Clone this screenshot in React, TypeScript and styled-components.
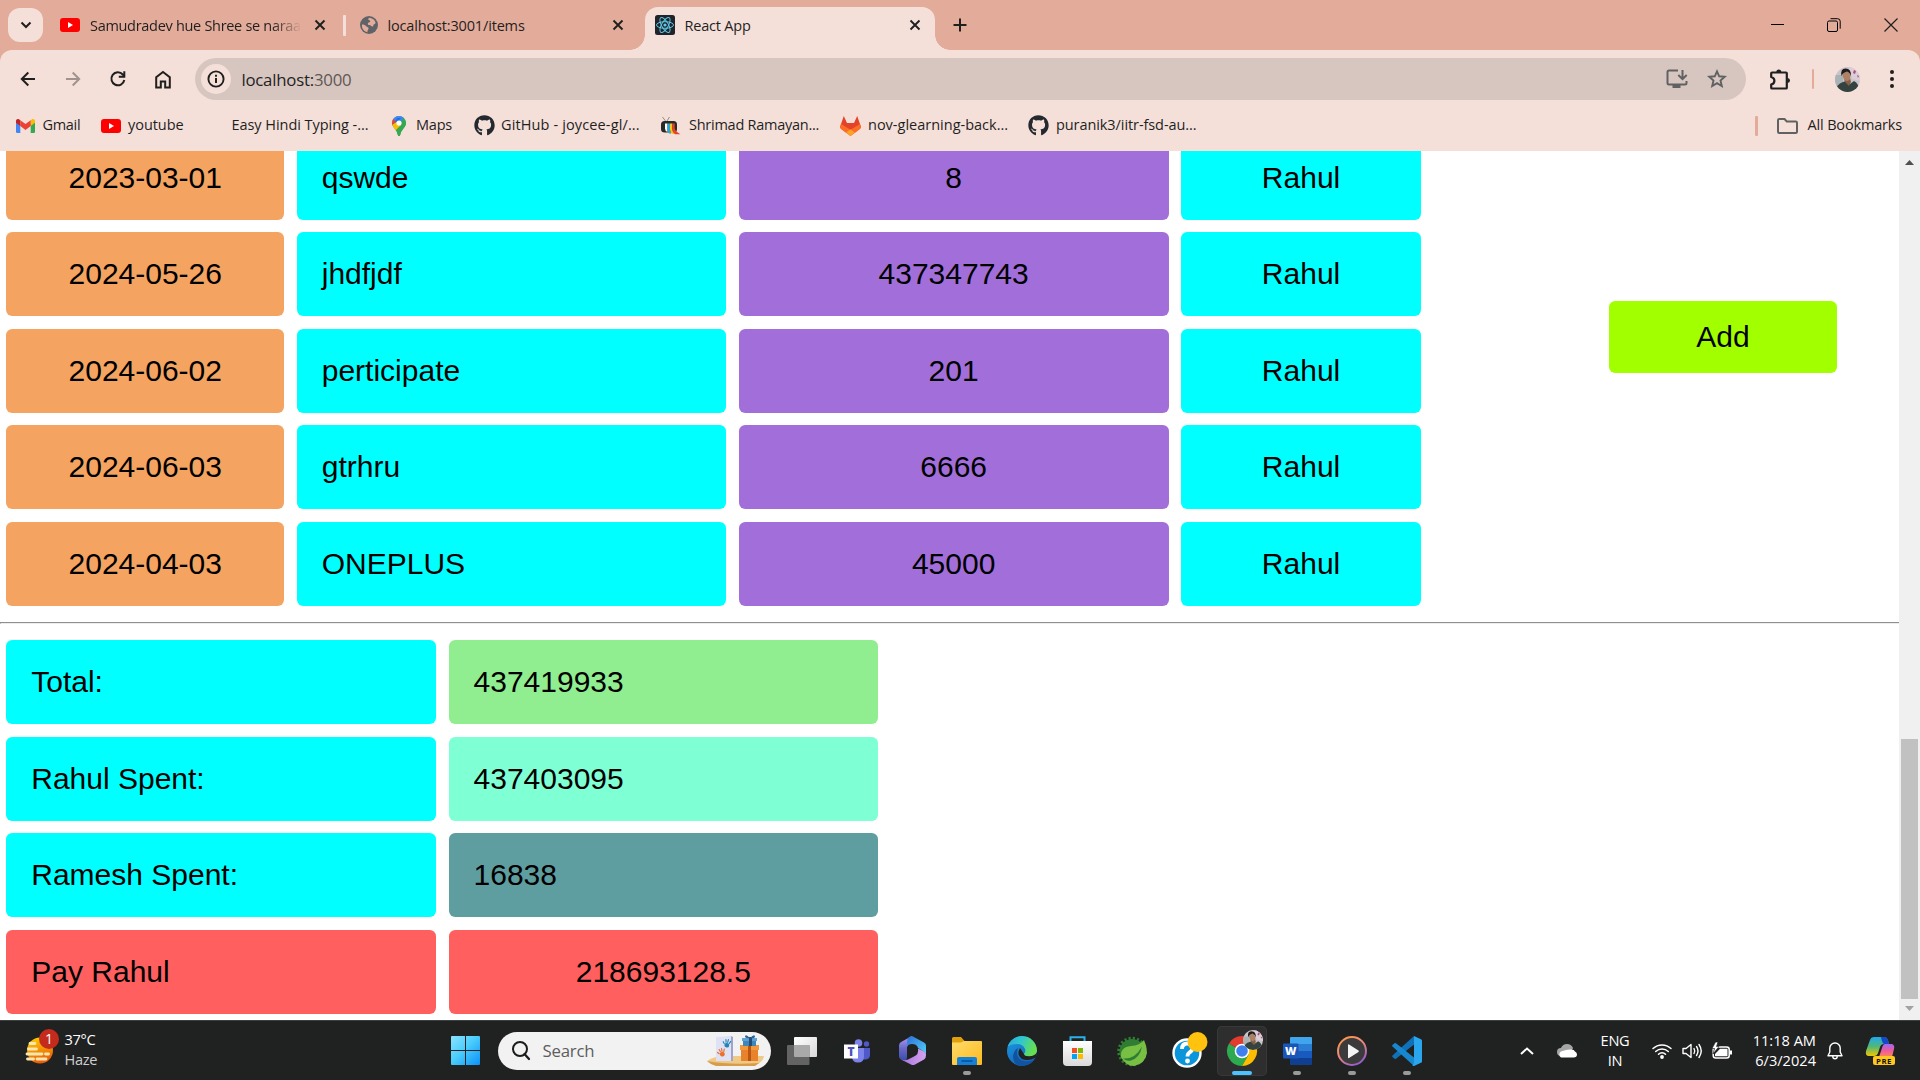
import React from "react";
import styled, { createGlobalStyle, css } from "styled-components";
import { FaGithub } from "react-icons/fa";

const GlobalStyle = createGlobalStyle`
  * { box-sizing: border-box; }
  html, body { margin: 0; padding: 0; overflow: hidden; background: #fff; }
  svg { display: block; flex: none; overflow: visible; }
`;

const Screen = styled.div`
  width: 1920px;
  height: 1080px;
  display: flex;
  flex-direction: column;
  overflow: hidden;
  font-family: "Open Sans", "Noto Sans", sans-serif;
  color: #1f1f1f;
`;

/* ---------- browser chrome ---------- */

const Frame = styled.div`
  height: 151px;
  flex: none;
  background: #e3ab9a;
`;

const TabStrip = styled.div`
  height: 50px;
  display: flex;
  align-items: center;
  padding-left: 8px;
`;

const TabSearch = styled.div`
  width: 35px;
  height: 34px;
  border-radius: 12px;
  background: #f5e0d9;
  display: flex;
  align-items: center;
  justify-content: center;
`;

const Tab = styled.div<{ $w: number; $ml: number; $active?: boolean }>`
  width: ${(p) => p.$w}px;
  margin-left: ${(p) => p.$ml}px;
  height: 35px;
  display: flex;
  align-items: center;
  ${(p) =>
    p.$active &&
    css`
      position: relative;
      height: 43px;
      margin-top: 7px;
      padding: 0 0 7px 10px;
      background: #f5e0d9;
      border-radius: 13px 13px 0 0;
      &::before,
      &::after {
        content: "";
        position: absolute;
        bottom: 0;
        width: 15px;
        height: 15px;
      }
      &::before {
        left: -15px;
        background: radial-gradient(circle at 0 0, transparent 14.5px, #f5e0d9 15px);
      }
      &::after {
        right: -15px;
        background: radial-gradient(circle at 100% 0, transparent 14.5px, #f5e0d9 15px);
      }
    `}
`;

const TabTitle = styled.div<{ $w: number; $ls?: number; $fade?: boolean }>`
  width: ${(p) => p.$w}px;
  margin-left: 10px;
  padding-top: 1px;
  font-size: 14.5px;
  line-height: 20px;
  letter-spacing: ${(p) => p.$ls ?? -0.3}px;
  white-space: nowrap;
  ${(p) => p.$fade && "mask-image: linear-gradient(90deg, #000 81%, transparent 94%);"}
`;

const TabDivider = styled.div`
  width: 2.5px;
  height: 21px;
  border-radius: 1px;
  background: #f5e0d9;
`;

const NewTab = styled.div`
  margin-left: 18.5px;
`;

const WindowButtons = styled.div`
  margin-left: auto;
  display: flex;
  gap: 42.6px;
  align-items: center;
  padding-right: 22px;
`;

const Toolbar = styled.div`
  height: 58px;
  display: flex;
  align-items: center;
  padding-left: 19px;
  border-radius: 12px 12px 0 0;
  background: #f5e0d9;
`;

const NavButtons = styled.div`
  width: 176px;
  display: flex;
  gap: 27px;
  align-items: center;
`;

const Omnibox = styled.div`
  width: 1552px;
  height: 42px;
  border-radius: 21px;
  background: #d7c6bf;
  display: flex;
  align-items: center;
  padding: 0 19px 0 6px;
`;

const SiteInfo = styled.div`
  width: 30px;
  height: 30px;
  border-radius: 50%;
  background: #f5e0d9;
  display: flex;
  align-items: center;
  justify-content: center;
`;

const Address = styled.div`
  flex: 1;
  margin-left: 10.5px;
  font-size: 16.8px;
  letter-spacing: -0.22px;
  span { color: #5e5855; }
`;

const OmniActions = styled.div`
  display: flex;
  gap: 19px;
`;

const ToolbarEnd = styled.div`
  flex: 1;
  display: flex;
  align-items: center;
  padding: 0 26px 0 23px;
`;

const Rule = styled.div<{ $ml: number }>`
  width: 2.5px;
  height: 20px;
  margin-left: ${(p) => p.$ml}px;
  border-radius: 1px;
  background: #e3ab9a;
`;

const Bookmarks = styled.div`
  height: 43px;
  display: flex;
  align-items: center;
  padding: 0 18px 8px 16px;
  background: #f5e0d9;
`;

const Bookmark = styled.div<{ $w: number }>`
  width: ${(p) => p.$w}px;
  display: flex;
  align-items: center;
`;

const BookmarkIcon = styled.div<{ $w: number }>`
  width: ${(p) => p.$w}px;
  flex: none;
`;

const BookmarkText = styled.span<{ $ls?: number }>`
  display: block;
  padding-bottom: 1px;
  font-size: 14.5px;
  line-height: 20px;
  letter-spacing: ${(p) => p.$ls ?? -0.3}px;
  white-space: nowrap;
`;

const AllBookmarks = styled.div`
  margin-left: auto;
  display: flex;
  align-items: center;
`;

/* ---------- page ---------- */

const Viewport = styled.div`
  height: 869px;
  flex: none;
  display: flex;
  background: #fff;
  overflow: hidden;
  font-family: Arial, "Liberation Sans", sans-serif;
  font-size: 30px;
  color: #000;
`;

const Page = styled.main`
  width: 1899px;
  height: 869px;
  display: flex;
  flex-direction: column;
`;

const Expenses = styled.section`
  height: 471px;
  display: flex;
  align-items: flex-end;
  justify-content: space-between;
  padding: 0 62px 16.5px 6.25px;
`;

const Table = styled.div`
  display: flex;
  flex-direction: column;
  gap: 12.5px;
`;

const TableRow = styled.div`
  display: flex;
  gap: 12.5px;
`;

const Cell = styled.div<{ $w: number; $bg: string; $center?: boolean }>`
  width: ${(p) => p.$w}px;
  height: 84px;
  display: flex;
  align-items: center;
  justify-content: ${(p) => (p.$center ? "center" : "flex-start")};
  padding: 0 25px;
  border-radius: 6.25px;
  background: ${(p) => p.$bg};
`;

const AddButton = styled.button`
  width: 228px;
  height: 72px;
  margin-bottom: 232.5px;
  padding: 0;
  border: 0;
  border-radius: 6.25px;
  background: #a2ff00;
  color: #000;
  font: inherit;
`;

const Divider = styled.hr`
  width: 100%;
  height: 2px;
  margin: 0;
  border: 0 solid;
  border-width: 1px 0 1px 1px;
  border-color: #8f8f8f #ededed #ededed #8f8f8f;
`;

const Totals = styled.section`
  padding: 16px 0 0 6.25px;
`;

const Scrollbar = styled.div`
  width: 21px;
  background: #f0f0f0;
  display: flex;
  flex-direction: column;
  align-items: center;
  justify-content: space-between;
  padding: 9px 0 9px;
`;

const ScrollTrack = styled.div`
  width: 17px;
  height: 839px;
  display: flex;
  align-items: flex-end;
  padding-bottom: 6px;
`;

const Thumb = styled.div`
  width: 17px;
  height: 260px;
  background: #c1c1c1;
`;

/* ---------- taskbar ---------- */

const Taskbar = styled.footer`
  height: 60px;
  flex: none;
  display: flex;
  align-items: center;
  background: #202121;
  border-top: 1px solid #3a3f40;
  color: #fff;
`;

const Weather = styled.div`
  width: 451px;
  display: flex;
  align-items: center;
  padding: 0 0 2px 25px;
  gap: 10.5px;
`;

const Lines = styled.div<{ $align?: string; $w?: number; $ls?: number }>`
  width: ${(p) => (p.$w ? p.$w + "px" : "auto")};
  padding-bottom: 2px;
  text-align: ${(p) => p.$align ?? "left"};
  font-size: 14.6px;
  line-height: 20px;
  letter-spacing: ${(p) => p.$ls ?? -0.3}px;
  white-space: nowrap;
`;

const Dim = styled.div`
  color: #cfcfcf;
`;

const SearchPill = styled.div`
  width: 273px;
  height: 38px;
  margin: 0 6px 0 18px;
  border-radius: 19px;
  background: #f2f2f2;
  display: flex;
  align-items: center;
  padding: 0 5px 0 14px;
  overflow: hidden;
`;

const SearchText = styled.span`
  flex: 1;
  margin-left: 12.5px;
  color: #5d5d5d;
  font-size: 16.8px;
  letter-spacing: -0.2px;
`;

const Apps = styled.div`
  display: flex;
  gap: 5px;
`;

const AppSlot = styled.div<{ $active?: boolean; $run?: boolean }>`
  position: relative;
  width: 50px;
  height: 50px;
  display: flex;
  align-items: center;
  justify-content: center;
  border-radius: 5px;
  background: ${(p) => (p.$active ? "#2e2e2e" : "transparent")};
  box-shadow: ${(p) => (p.$active ? "inset 0 0 0 1px #383838" : "none")};
  &::after {
    content: "";
    position: absolute;
    bottom: 1px;
    height: 4px;
    border-radius: 2px;
    width: ${(p) => (p.$active ? 20 : p.$run ? 8 : 0)}px;
    background: ${(p) => (p.$active ? "#4cc2ff" : "#9a9a9a")};
  }
`;

const Tray = styled.div`
  margin-left: auto;
  display: flex;
  align-items: center;
  padding-right: 24px;
`;

const TrayItem = styled.div<{ $ml: number }>`
  margin-left: ${(p) => p.$ml}px;
`;

/* ---------- drawings ---------- */

const YouTube = () => (
  <svg width="20" height="14" viewBox="0 0 20 14">
    <rect width="20" height="14" rx="3" fill="#f00" />
    <path d="M8 4v6l5-3z" fill="#fff" />
  </svg>
);

const CloseX = ({ s = 10, w = 1.9 }: { s?: number; w?: number }) => (
  <svg width={s} height={s} viewBox={`0 0 ${s} ${s}`}>
    <path d={`M.5.5 ${s - 0.5} ${s - 0.5}M${s - 0.5}.5.5 ${s - 0.5}`} stroke="#1f1f1f" strokeWidth={w} />
  </svg>
);

const Globe = () => (
  <svg width="18" height="18" viewBox="0 0 18 18">
    <circle cx="9" cy="9" r="9" fill="#5f6368" />
    <path d="M2 8.500c2 0 3 .5 4.500 2 .8 1 2.300 .5 2 2.300-.2 1-1 1.200-1.200 3.400C4 15.600 1.500 12.500 2 8.500zM9 1.800c3 .1 5.500 1.900 6.600 4.600-.3 1.500-1.300 1.500-2.100 2.300-.5.700.2 1.400-.6 1.700-1.300.5-2-1-3.500-1.300-1.200-.2-1.600-.5-1.600-1.400 0-1.200 1.600-1 2.300-1.900C10.700 4.700 9.500 4 8 3.400z" fill="#e3ab9a" />
  </svg>
);

const ReactIcon = () => (
  <svg width="20" height="20" viewBox="0 0 20 20">
    <rect width="20" height="20" rx="2.500" fill="#20232a" />
    <g fill="none" stroke="#5dc9e8" strokeWidth="1">
      <ellipse cx="10" cy="10" rx="8.500" ry="3.300" />
      <ellipse cx="10" cy="10" rx="8.500" ry="3.300" transform="rotate(60 10 10)" />
      <ellipse cx="10" cy="10" rx="8.500" ry="3.300" transform="rotate(120 10 10)" />
    </g>
    <circle cx="10" cy="10" r="1.600" fill="#5dc9e8" />
  </svg>
);

const Arrow = ({ flip, color }: { flip?: boolean; color: string }) => (
  <svg width="18" height="18" viewBox="0 0 18 18" transform={flip ? "scale(-1 1)" : undefined}>
    <path d="M16 9H3M9.300 2.500 2.800 9l6.500 6.500" fill="none" stroke={color} strokeWidth="2" />
  </svg>
);

const Reload = () => (
  <svg width="18" height="18" viewBox="0 0 18 18">
    <path d="M15.300 10A6.500 6.500 0 1 1 13.800 4.500L15.500 6.500" fill="none" stroke="#1f1f1f" strokeWidth="2" />
    <path d="M16.300 1.200v6.500H9.800v-2h4.500V1.200z" fill="#1f1f1f" />
  </svg>
);

const Home = () => (
  <svg width="18" height="19" viewBox="0 0 18 19">
    <path d="M2.200 17.500V7.200L9 2l6.800 5.200v10.300h-4.600v-6H6.800v6z" fill="none" stroke="#1f1f1f" strokeWidth="2" />
  </svg>
);

const Info = () => (
  <svg width="18" height="18" viewBox="0 0 18 18">
    <circle cx="9" cy="9" r="7.600" fill="none" stroke="#1f1f1f" strokeWidth="1.900" />
    <path d="M9 8v5M9 4.700v2" stroke="#1f1f1f" strokeWidth="2" />
  </svg>
);

const Install = () => (
  <svg width="22" height="20" viewBox="0 0 22 20">
    <path d="M12 1.500H3Q1.500 1.500 1.500 3v11Q1.500 15.500 3 15.500h16q1.500 0 1.500-1.500v-2" fill="none" stroke="#5f6163" strokeWidth="2" />
    <path d="M6.500 15h8v4h-8z" fill="#5f6163" />
    <path d="M16.500 1v9M12.300 6l4.200 4.200L20.700 6" fill="none" stroke="#5f6163" strokeWidth="2" />
  </svg>
);

const Star = () => (
  <svg width="20" height="19" viewBox="0 0 20 19">
    <path d="M10 2.300 12.200 7.300l5.500.5-4.200 3.700 1.300 5.500-4.800-2.900L5.200 17l1.300-5.500-4.200-3.700 5.500-.5z" fill="none" stroke="#5f6163" strokeWidth="1.900" />
  </svg>
);

const Extension = () => (
  <svg width="22" height="21" viewBox="0 0 22 21">
    <path d="M3 3.500h14q.8 0 .8.800v14.400q0 .8-.8.800H3q-.8 0-.8-.8V15.500q3.200-.8 3.200-3.800T2.200 8V4.300q0-.8.800-.8z" fill="none" stroke="#1f1f1f" strokeWidth="2.200" strokeLinejoin="round" />
    <path d="M7.300 3a2.500 2.500 0 0 1 5 0zM18.500 9a2.500 2.500 0 0 1 0 5z" fill="#1f1f1f" />
  </svg>
);

const Portrait = ({ s, id }: { s: number; id: string }) => (
  <svg width={s} height={s} viewBox="0 0 25 25">
    <clipPath id={id}>
      <circle cx="12.500" cy="12.500" r="12.500" />
    </clipPath>
    <g clipPath={`url(#${id})`}>
      <rect width="25" height="25" fill="#c9c4c9" />
      <path d="M14 0h11v14l-8-2z" fill="#dccdd6" />
      <path d="m19 3 2 1-1 3-2-1zM22 8l2 1-1 2z" fill="#a8507a" />
      <path d="M0 8h8v17H0z" fill="#a9b2b4" />
      <path d="M1 25q0-8 7-10l3-1 4 3 4-3q5 2 5 11z" fill="#34433f" />
      <path d="m9 12 1 3 4 4 2-4-1-4z" fill="#8a5f47" />
      <ellipse cx="11.500" cy="9" rx="3.700" ry="5" fill="#ae8164" transform="rotate(-18 11.500 9)" />
      <path d="M6.500 9Q5 1.500 10.500 1.500q6 0 5.500 8-1-4-4-5-3 1-4 2z" fill="#211c1c" />
    </g>
  </svg>
);

const Dots = () => (
  <svg width="4" height="20" viewBox="0 0 4 20">
    {[3, 10, 17].map((y) => (
      <circle key={y} cx="2" cy={y} r="2" fill="#1f1f1f" />
    ))}
  </svg>
);

const Gmail = () => (
  <svg width="19" height="14" viewBox="0 0 19 14">
    <path d="M0 2v10.700Q0 14 1.300 14h3V5z" fill="#4285f4" />
    <path d="M19 2v10.700q0 1.300-1.300 1.300h-3V5z" fill="#34a853" />
    <path d="M14.700 1.200V7L19 3.800V2c0-1.900-2-2.500-3.300-1.500z" fill="#fbbc04" />
    <path d="M4.300 1.200V7L0 3.800V2C0 .1 2-.5 3.300.5z" fill="#c5221f" />
    <path d="M4.300 7V1.200l5.200 3.900 5.200-3.900V7l-5.200 3.900z" fill="#ea4335" />
  </svg>
);

const MapsPin = () => (
  <svg width="14" height="20" viewBox="0 0 14 20">
    <clipPath id="pin">
      <path d="M7 0a7 7 0 0 1 7 7c0 4.500-5 6.500-5.700 11.700Q8 20 7 20t-1.300-1.300C5 13.500 0 11.500 0 7a7 7 0 0 1 7-7z" />
    </clipPath>
    <g clipPath="url(#pin)">
      <rect width="14" height="20" fill="#34a853" />
      <path d="M0 0h14L5 9 0 4z" fill="#4285f4" />
      <path d="M0 2 5 6 1.500 10-1 8z" fill="#ea4335" />
      <path d="m1 11 8-9H5z" fill="#1a73e8" />
      <path d="M0 9 4.500 6l4.500 3-6 6z" fill="#fbbc04" />
      <path d="m14 4-5 6-5 6 3 5 8-10z" fill="#34a853" />
    </g>
    <circle cx="7" cy="7" r="2.600" fill="#fff" />
  </svg>
);

const RetroTv = () => (
  <svg width="20" height="18" viewBox="0 0 20 18">
    <path d="m4.500 4-3-4M6 4l2.500-4" stroke="#777" strokeWidth=".8" />
    <rect x="0" y="4" width="16" height="11.500" rx="3.500" fill="#2b2927" />
    <path d="M4 6.500h2.500V15Q4 14 4 11.500z" fill="#fff" />
    <path d="M6.500 6.500H9V15l1 2q-3.500-.5-3.500-4.500z" fill="#2aa7d8" />
    <path d="M9 6.500h2.300V12q0 3 2.700 5h-3Q9 15.500 9 12.500z" fill="#f6c71c" />
    <path d="M11.300 6.500h2.400V11q.3 3.500 5.800 6.300h-5.500q-2.700-2-2.700-5.300z" fill="#e4422b" />
  </svg>
);

const GitLab = () => (
  <svg width="21" height="20" viewBox="0 0 21 20">
    <path d="M3.800 0 1 8l-.8 2.500q-.3 1.500 1 2.500l9.300 7 9.300-7q1.300-1 1-2.500L20 8 17.200 0l-3.200 7H7z" fill="#e24329" />
    <path d="M1 8 .2 10.500q-.3 1.500 1 2.500l9.300 7L15 16.600zM20 8l.8 2.500q.3 1.500-1 2.500l-9.300 7L6 16.600z" fill="#fc6d26" />
    <path d="m6 16.600 4.500-3.400 4.500 3.400-4.500 3.400z" fill="#fca326" />
    <path d="M4 7h13l-6.500 6.500z" fill="#e24329" />
  </svg>
);

const Folder = () => (
  <svg width="21" height="16" viewBox="0 0 21 16">
    <path d="M1 2.200Q1 1 2.200 1H7.500l2.300 2.500h9Q20 3.500 20 4.700v9Q20 15 18.800 15H2.200Q1 15 1 13.800z" fill="none" stroke="#5f6163" strokeWidth="2" />
  </svg>
);

const HazeIcon = () => (
  <svg width="29" height="42" viewBox="0 0 29 42">
    <defs>
      <linearGradient id="sun" x1="0" y1="0" x2=".3" y2="1">
        <stop offset="0" stopColor="#ffd400" />
        <stop offset="1" stopColor="#e8600a" />
      </linearGradient>
    </defs>
    <circle cx="15" cy="21.500" r="13" fill="url(#sun)" />
    <g stroke="#fbe6b0" strokeWidth="2.800" strokeLinecap="round">
      <path d="M5 14.500h5M3.500 20h8M2 25h15M20.500 25h3M2.500 30h6M12 30h9" />
    </g>
    <circle cx="24" cy="10" r="10" fill="#c42b1c" />
    <text x="24" y="15" textAnchor="middle" fontSize="14" fill="#fff">1</text>
  </svg>
);

const WinLogo = () => (
  <svg width="29" height="29" viewBox="0 0 29 29">
    <defs>
      <linearGradient id="win" x1="0" y1="0" x2="1" y2="1">
        <stop offset="0" stopColor="#8ae3ff" />
        <stop offset=".45" stopColor="#4ccdfb" />
        <stop offset="1" stopColor="#0a92f8" />
      </linearGradient>
    </defs>
    <path d="M1 0h13v14H0V1q0-1 1-1zM15 0h13q1 0 1 1v13H15zM0 15h14v14H1q-1 0-1-1zM15 15h14v13q0 1-1 1H15z" fill="url(#win)" />
  </svg>
);

const Magnifier = () => (
  <svg width="18" height="19" viewBox="0 0 18 19">
    <circle cx="8" cy="8" r="7" fill="none" stroke="#1c1c1c" strokeWidth="2" />
    <path d="m12.500 13 4.500 5" stroke="#1c1c1c" strokeWidth="2.300" strokeLinecap="round" />
  </svg>
);

const Hand = ({ x, y, c, r }: { x: number; y: number; c: string; r: number }) => (
  <g transform={`translate(${x} ${y}) rotate(${r}) scale(.82)`} stroke={c} strokeWidth="1.400" strokeLinecap="round">
    <ellipse cx="0" cy="1.500" rx="3" ry="2.800" fill={c} stroke="none" />
    <path d="M-3.500 0-5-2M-1.500-2-2.200-5M.5-2 .8-5.500M2.500-1 4-4" />
  </g>
);

const SearchArt = () => (
  <svg width="60" height="32" viewBox="0 0 60 32">
    <path d="M1 26q8-5 16-5h41q-1 6-8 9H10q-6-1-9-4z" fill="#f0c987" />
    <path d="M1 26q4 4 9 5h39l4-3q-30 2-52-2z" fill="#d69d4d" />
    <path d="m10 2 15-1 2 1v24H10z" fill="#dfe1f5" />
    <path d="m25 1 2 1v24h-2z" fill="#9fa4cf" />
    <Hand x={21} y={9} c="#2384b5" r={10} />
    <Hand x={16} y={18} c="#ec6f2c" r={-15} />
    <path d="M35 12h17v14H35z" fill="#e8832b" />
    <path d="M34 10h19v5H34z" fill="#f2993d" />
    <path d="M42 10h3v16h-3z" fill="#b85713" />
    <path d="M37 3h13v8H37z" fill="#3f87ba" />
    <path d="M36 3h15v3H36z" fill="#5ba3d4" />
    <path d="M43 2h3v9h-3z" fill="#234d78" />
    <path d="M44 3q-5-5-5-1 2 2 5 1 5-5 5-1-1 2-5 1z" fill="#315f94" />
  </svg>
);

const TaskView = () => (
  <svg width="30" height="28" viewBox="0 0 30 28">
    <defs>
      <linearGradient id="tv" x2="1" y2="1"><stop stopColor="#fff" /><stop offset="1" stopColor="#d8d8d8" /></linearGradient>
    </defs>
    <rect x="7" y="0" width="23" height="20" rx="1" fill="url(#tv)" />
    <rect x="0" y="8" width="22.500" height="20" rx="1" fill="#636363" />
    <path d="M7 8h15.500v12H8q-1 0-1-1z" fill="#a9a9a9" />
  </svg>
);

const Teams = () => (
  <svg width="27" height="24" viewBox="0 0 27 24">
    <circle cx="14.500" cy="4" r="3.800" fill="#7b83eb" />
    <circle cx="22.500" cy="5" r="2.700" fill="#5059c9" />
    <path d="M18 9h8v7q0 4-4.500 4.500H18z" fill="#5059c9" />
    <path d="M8 9h12v8.500q0 6-6 6t-6-6z" fill="#7b83eb" />
    <rect x="0" y="5.500" width="14" height="14" fill="#fff" />
    <text x="7" y="17" textAnchor="middle" fontWeight="800" fontSize="12" fill="#4b53bc">T</text>
  </svg>
);

const M365 = () => (
  <svg width="27" height="29" viewBox="0 0 27 29">
    <defs>
      <linearGradient id="ma" x2="0" y2="1"><stop stopColor="#b69cf2" /><stop offset=".5" stopColor="#6968c8" /><stop offset="1" stopColor="#3a4ba5" /></linearGradient>
      <linearGradient id="mb" x2="1" y2="1"><stop stopColor="#2c6fd8" /><stop offset="1" stopColor="#55d5f8" /></linearGradient>
      <linearGradient id="mc" x2="1"><stop stopColor="#a573dc" /><stop offset="1" stopColor="#d6a3f0" /></linearGradient>
    </defs>
    <path d="M13 0 2 6Q0 7 0 9.500v11q0 2 2 3l3 1.500q3-1 3-4V11q0-3 3-5l2-1z" fill="url(#ma)" />
    <path d="m10 1 3-1 12 6.500q2 1 2 3V20q0-4-4-5.500L19 12q-1-4-6-4-4 0-5 3V6q0-3 2-5z" fill="url(#mb)" />
    <path d="M2 23.500 12 28.500q2 1 4 0l9-5q2-1 2-4.500 0-3-4-4.500L19 12.500q1 6-4 8l-6 3q-4 1.500-7 0z" fill="url(#mc)" />
  </svg>
);

const Explorer = () => (
  <svg width="30" height="28" viewBox="0 0 30 28">
    <defs>
      <linearGradient id="ex" x2="1" y2="1"><stop stopColor="#ffdc6b" /><stop offset="1" stopColor="#fcb91f" /></linearGradient>
    </defs>
    <path d="M0 1.500Q0 0 1.500 0H9l3.500 4H29v8H0z" fill="#e2a00d" />
    <path d="M0 5.500h9L12 4h17q1 0 1 1v22q0 1-1 1H1q-1 0-1-1z" fill="url(#ex)" />
    <path d="M5 28v-6q0-2 2-2h16q2 0 2 2v6z" fill="#1480d8" />
    <path d="M9.500 24h11" stroke="#0c599e" strokeWidth="1.800" />
  </svg>
);

const Edge = () => (
  <svg width="30" height="30" viewBox="0 0 30 30">
    <defs>
      <linearGradient id="ea" x2="1" y2=".3"><stop stopColor="#2aa5e0" /><stop offset=".5" stopColor="#30c6cf" /><stop offset="1" stopColor="#66e04e" /></linearGradient>
      <linearGradient id="eb" x2=".6" y2="1"><stop stopColor="#1b9de2" /><stop offset="1" stopColor="#1464b8" /></linearGradient>
      <clipPath id="ec"><circle cx="15" cy="15" r="15" /></clipPath>
    </defs>
    <g clipPath="url(#ec)">
      <rect width="30" height="30" fill="url(#eb)" />
      <path d="M11 12q-3 9 4 12.500 6 2.500 15-1.500v8H15Q6 29 6 20q1-6 5-8z" fill="#1253a0" />
      <path d="M13 12q-4 7 2 11 6 2.500 13-1l4 1V16l-10 4-5-2z" fill="#202121" />
      <path d="M-1 12Q3 0 15 0q15 1 15.500 12 0 8-8.500 8.300-5 0-5-2.500 2-2 1-5Q16 8 10 8 3 8-1 12z" fill="url(#ea)" />
    </g>
  </svg>
);

const Store = () => (
  <svg width="29" height="30" viewBox="0 0 29 30">
    <defs>
      <linearGradient id="st" x2="0" y2="1"><stop stopColor="#fff" /><stop offset="1" stopColor="#d9d9d9" /></linearGradient>
    </defs>
    <path d="M7.500 8V1.200h14V8" fill="none" stroke="#2ab2e8" strokeWidth="2" />
    <path d="M0 5h29v21q0 4-4 4H4q-4 0-4-4z" fill="url(#st)" />
    <path d="M9 12h5v5H9z" fill="#f25022" />
    <path d="M15 12h5v5h-5z" fill="#7fba00" />
    <path d="M9 18h5v5H9z" fill="#00a4ef" />
    <path d="M15 18h5v5h-5z" fill="#ffb900" />
  </svg>
);

const Spring = () => (
  <svg width="30" height="30" viewBox="0 0 30 30">
    <circle cx="15" cy="15.500" r="12.500" fill="#2f7d32" />
    <circle cx="15" cy="15.500" r="13.300" fill="none" stroke="#2f7d32" strokeWidth="3" strokeDasharray="2.200 2" />
    <path d="M4 21Q3 11 14 10q9-.5 13-6 3 6 3 13-2 11-13 13-8 0-13-9z" fill="#78c043" />
    <path d="M6 22.500q12 1 19-12-2 11-11 14-5 1-8-2z" fill="#2f7d32" />
  </svg>
);

const Help = () => (
  <svg width="31" height="38" viewBox="0 0 31 38">
    <circle cx="15" cy="21" r="13.500" fill="#0b96dc" stroke="#fff" strokeWidth="2.400" />
    <path d="M10 17q0-5.500 5.500-5.500 5 0 5 4.500 0 2.700-3 4.500-2 1.300-2 4" fill="none" stroke="#fff" strokeWidth="3.800" />
    <circle cx="15.500" cy="29" r="2.400" fill="#fff" />
    <circle cx="25.500" cy="10" r="10" fill="#ffc20e" />
  </svg>
);

const ChromeWrap = styled.div`
  position: relative;
  > svg + svg {
    position: absolute;
    right: -6px;
    top: -6px;
  }
`;

const ChromeIcon = () => (
  <ChromeWrap>
    <svg width="30" height="30" viewBox="0 0 30 30">
      <path d="M15 15 2 7.500A15 15 0 0 0 15 30l6.500-11.300z" fill="#2da94f" />
      <path d="M28 7.500H15L21.500 18.700 15 30A15 15 0 0 0 28 7.500z" fill="#fdbd00" />
      <path d="M15 15 2 7.500A15 15 0 0 1 28 7.500H15z" fill="#e33b2e" />
      <circle cx="15" cy="15" r="7.300" fill="#fff" />
      <circle cx="15" cy="15" r="5.800" fill="#3f7fee" />
    </svg>
    <Portrait s={20} id="task-user" />
  </ChromeWrap>
);

const Word = () => (
  <svg width="29" height="28" viewBox="0 0 29 28">
    <path d="M7 1q0-1 1-1h20q1 0 1 1v6H7z" fill="#41a5ee" />
    <path d="M7 7h22v7H7z" fill="#2b7cd3" />
    <path d="M7 14h22v7H7z" fill="#185abd" />
    <path d="M7 21h22v6q0 1-1 1H8q-1 0-1-1z" fill="#103f91" />
    <rect x="0" y="6.500" width="15.500" height="15" rx="1" fill="#1a56b8" />
    <text x="7.700" y="18" textAnchor="middle" fontSize="11" fontWeight="800" fill="#fff">W</text>
  </svg>
);

const Player = () => (
  <svg width="30" height="30" viewBox="0 0 30 30">
    <defs>
      <linearGradient id="pl" x2=".6" y2="1"><stop stopColor="#ff9a3d" /><stop offset=".5" stopColor="#f08a78" /><stop offset="1" stopColor="#9a5fc8" /></linearGradient>
    </defs>
    <circle cx="15" cy="15" r="14" fill="#3b3b3b" stroke="url(#pl)" strokeWidth="2" />
    <path d="M11 9v12.500q0 1 1 .5l9.500-6q.8-.7 0-1.400L12 8.500q-1-.5-1 .5z" fill="#f4f4f4" />
  </svg>
);

const VsCode = () => (
  <svg width="30" height="30" viewBox="0 0 30 30">
    <path d="M22 0v8.500L4 22.800q-.8.600-1.500 0L.500 21q-.8-.8 0-1.600z" fill="#0f72b8" />
    <path d="M22 30v-8.500L4 7.200q-.8-.6-1.500 0L.500 9q-.8.800 0 1.600z" fill="#1788cf" />
    <path d="M22 0 29 3.200q1 .5 1 1.600v20.400q0 1.100-1 1.600L22 30q-1 .3-1.500-.5L22 27z" fill="#2aa6ef" />
  </svg>
);

const Chevron = ({ up, c, w = 12 }: { up?: boolean; c: string; w?: number }) => (
  <svg width={w} height="8" viewBox={`0 0 ${w} 8`}>
    <path d={up ? `M1 7 ${w / 2} 1.500 ${w - 1} 7` : `M1.500 1.500 ${w / 2} 6l${w / 2 - 1.5}-4.500`} fill="none" stroke={c} strokeWidth="2" />
  </svg>
);

const Cloud = () => (
  <svg width="20" height="14" viewBox="0 0 20 14">
    <path d="M4 12a4 4 0 0 1 0-8A6.500 6.500 0 0 1 16 4l-3 6z" fill="#a5a5a5" />
    <path d="M4 13.500a3.500 3.500 0 0 1 0-6l5-1.500 4-.500q4-.5 5 2 2 1 2 3 0 3-3.500 3z" fill="#fff" />
  </svg>
);

const Wifi = () => (
  <svg width="20" height="16" viewBox="0 0 20 16">
    <g fill="none" stroke="#fff" strokeWidth="1.500" strokeLinecap="round">
      <path d="M1 5.500a13 13 0 0 1 18 0M3.700 8.500a9 9 0 0 1 12.600 0M6.500 11.300a5 5 0 0 1 7 0" />
    </g>
    <circle cx="10" cy="14" r="1.900" fill="#fff" />
  </svg>
);

const Sound = () => (
  <svg width="20" height="16" viewBox="0 0 20 16">
    <g fill="none" stroke="#fff" strokeWidth="1.400" strokeLinecap="round" strokeLinejoin="round">
      <path d="M1 5.500h3L9 1.500v13l-5-4H1z" />
      <path d="M12 5.500q1.500 2.500 0 5M14.500 3.500q3 4.500 0 9M17 1.500q4.500 6.500 0 13" />
    </g>
  </svg>
);

const Battery = () => (
  <svg width="20" height="17" viewBox="0 0 20 17">
    <rect x="1.200" y="5" width="16" height="11" rx="2.500" fill="none" stroke="#fff" strokeWidth="1.500" />
    <path d="M3 14.300V12l5-5.200h7.500v7.500z" fill="#fff" />
    <path d="M18 8.500h2v4h-2z" fill="#fff" />
    <path d="M3.500 0 0 6.500h2.500L1 12l6-7.500H4.500L6 0z" fill="#fff" stroke="#202121" strokeWidth=".7" />
  </svg>
);

const Bell = () => (
  <svg width="16" height="18" viewBox="0 0 16 18">
    <path d="M8 1a5 5 0 0 0-5.200 5v4L1 13.800h14L13.200 10V6A5 5 0 0 0 8 1zM5.800 14.500a2.200 2.200 0 0 0 4.400 0" fill="none" stroke="#fff" strokeWidth="1.400" strokeLinejoin="round" />
  </svg>
);

const Copilot = () => (
  <svg width="30" height="28" viewBox="0 0 30 28">
    <defs>
      <linearGradient id="ca" x2="0" y2="1"><stop stopColor="#20a8ee" /><stop offset=".5" stopColor="#50b878" /><stop offset="1" stopColor="#f0c800" /></linearGradient>
      <linearGradient id="cb" x2="0" y2="1"><stop stopColor="#9b6cf0" /><stop offset=".5" stopColor="#ec5aa0" /><stop offset="1" stopColor="#ff8a50" /></linearGradient>
    </defs>
    <path d="M8 0h11q3 1 4 7h-5q-3 0-4 3l-2 6q-1 3-4 3H3q-4 0-3-5L4 3q1-3 4-3z" fill="url(#ca)" />
    <path d="M15 0h4q3 1 4 7h-5q-2-1-3-7z" fill="#1648c8" />
    <path d="M19 7h7q3 1 2 5l-2 8H13l3-9q1-4 3-4z" fill="url(#cb)" />
    <rect x="7" y="19" width="22" height="9" rx="2" fill="#ffc81e" />
    <text x="18" y="26.500" textAnchor="middle" fontSize="7.800" fontWeight="700" letterSpacing=".5" fill="#111">PRE</text>
  </svg>
);

const Triangle = ({ up }: { up?: boolean }) => (
  <svg width="9" height="5" viewBox="0 0 9 5">
    <path d={up ? "M0 5 4.500 0 9 5z" : "M0 0h9L4.500 5z"} fill={up ? "#505050" : "#a3a3a3"} />
  </svg>
);

/* ---------- data ---------- */

const expenses = [
  ["2023-03-01", "qswde", "8", "Rahul"],
  ["2024-05-26", "jhdfjdf", "437347743", "Rahul"],
  ["2024-06-02", "perticipate", "201", "Rahul"],
  ["2024-06-03", "gtrhru", "6666", "Rahul"],
  ["2024-04-03", "ONEPLUS", "45000", "Rahul"],
];

const totals = [
  { label: "Total:", value: "437419933", left: "#00ffff", right: "#90ee90" },
  { label: "Rahul Spent:", value: "437403095", left: "#00ffff", right: "#7fffd4" },
  { label: "Ramesh Spent:", value: "16838", left: "#00ffff", right: "#5f9ea0" },
  { label: "Pay Rahul", value: "218693128.5", left: "#ff5f5f", right: "#ff5f5f", center: true },
];

const bookmarks: { text: string; w: number; iw: number; icon: React.ReactNode; ls?: number }[] = [
  { text: "Gmail", w: 85, iw: 26.5, icon: <Gmail /> },
  { text: "youtube", w: 103, iw: 27, icon: <YouTube />, ls: -0.05 },
  { text: "Easy Hindi Typing -...", w: 188, iw: 27.5, icon: null, ls: -0.05 },
  { text: "Maps", w: 82, iw: 24, icon: <MapsPin />, ls: -0.2 },
  { text: "GitHub - joycee-gl/...", w: 187, iw: 27, icon: <FaGithub size={21} color="#24292f" />, ls: 0.13 },
  { text: "Shrimad Ramayan...", w: 179, iw: 28, icon: <RetroTv />, ls: -0.25 },
  { text: "nov-glearning-back...", w: 188, iw: 28, icon: <GitLab />, ls: 0 },
  { text: "puranik3/iitr-fsd-au...", w: 180, iw: 28, icon: <FaGithub size={21} color="#24292f" />, ls: -0.08 },
];

export default function App() {
  return (
    <Screen>
      <GlobalStyle />
      <Frame>
        <TabStrip>
          <TabSearch>
            <Chevron c="#1f1f1f" />
          </TabSearch>
          <Tab $w={283} $ml={17}>
            <YouTube />
            <TabTitle $w={225} $fade>Samudradev hue Shree se naraa</TabTitle>
            <CloseX />
          </Tab>
          <TabDivider />
          <Tab $w={285} $ml={14}>
            <Globe />
            <TabTitle $w={225} $ls={-0.16}>localhost:3001/items</TabTitle>
            <CloseX />
          </Tab>
          <Tab $w={290} $ml={0} $active>
            <ReactIcon />
            <TabTitle $w={225} $ls={-0.2}>React App</TabTitle>
            <CloseX />
          </Tab>
          <NewTab>
            <svg width="14" height="14" viewBox="0 0 14 14">
              <path d="M7 .5v13M.5 7h13" stroke="#1f1f1f" strokeWidth="2" />
            </svg>
          </NewTab>
          <WindowButtons>
            <svg width="14" height="2" viewBox="0 0 14 2">
              <path d="M0 .5h13" stroke="#000" />
            </svg>
            <svg width="14" height="14" viewBox="0 0 14 14">
              <rect x=".5" y="3" width="10" height="10.500" rx="1.500" fill="none" stroke="#000" />
              <path d="M3.500.7h7q2.700 0 2.700 2.500v7.500" fill="none" stroke="#000" />
            </svg>
            <CloseX s={14} w={1.2} />
          </WindowButtons>
        </TabStrip>
        <Toolbar>
          <NavButtons>
            <Arrow color="#1f1f1f" />
            <Arrow color="#a0938e" flip />
            <Reload />
            <Home />
          </NavButtons>
          <Omnibox>
            <SiteInfo>
              <Info />
            </SiteInfo>
            <Address>
              localhost:<span>3000</span>
            </Address>
            <OmniActions>
              <Install />
              <Star />
            </OmniActions>
          </Omnibox>
          <ToolbarEnd>
            <Extension />
            <Rule $ml={20.5} />
            <TrayItem $ml={20.5}>
              <Portrait s={25} id="profile" />
            </TrayItem>
            <TrayItem $ml={30.5}>
              <Dots />
            </TrayItem>
          </ToolbarEnd>
        </Toolbar>
        <Bookmarks>
          {bookmarks.map((b) => (
            <Bookmark key={b.text} $w={b.w}>
              <BookmarkIcon $w={b.iw}>{b.icon}</BookmarkIcon>
              <BookmarkText $ls={b.ls}>{b.text}</BookmarkText>
            </Bookmark>
          ))}
          <AllBookmarks>
            <Rule $ml={0} />
            <TrayItem $ml={19.5}>
              <Folder />
            </TrayItem>
            <TrayItem $ml={9.5}>
              <BookmarkText $ls={-0.17}>All Bookmarks</BookmarkText>
            </TrayItem>
          </AllBookmarks>
        </Bookmarks>
      </Frame>

      <Viewport>
        <Page>
          <Expenses>
            <Table>
              {expenses.map(([date, item, amount, payee]) => (
                <TableRow key={date}>
                  <Cell $w={278} $bg="#f4a460" $center>{date}</Cell>
                  <Cell $w={429.5} $bg="#00ffff">{item}</Cell>
                  <Cell $w={429.8} $bg="#a26fda" $center>{amount}</Cell>
                  <Cell $w={240} $bg="#00ffff" $center>{payee}</Cell>
                </TableRow>
              ))}
            </Table>
            <AddButton>Add</AddButton>
          </Expenses>
          <Divider />
          <Totals>
            <Table>
              {totals.map((t) => (
                <TableRow key={t.label}>
                  <Cell $w={429.8} $bg={t.left}>{t.label}</Cell>
                  <Cell $w={429.5} $bg={t.right} $center={t.center}>{t.value}</Cell>
                </TableRow>
              ))}
            </Table>
          </Totals>
        </Page>
        <Scrollbar>
          <Triangle up />
          <ScrollTrack>
            <Thumb />
          </ScrollTrack>
          <Triangle />
        </Scrollbar>
      </Viewport>

      <Taskbar>
        <Weather>
          <HazeIcon />
          <Lines>
            <div>37°C</div>
            <Dim>Haze</Dim>
          </Lines>
        </Weather>
        <WinLogo />
        <SearchPill>
          <Magnifier />
          <SearchText>Search</SearchText>
          <SearchArt />
        </SearchPill>
        <Apps>
          <AppSlot><TaskView /></AppSlot>
          <AppSlot><Teams /></AppSlot>
          <AppSlot><M365 /></AppSlot>
          <AppSlot $run><Explorer /></AppSlot>
          <AppSlot><Edge /></AppSlot>
          <AppSlot><Store /></AppSlot>
          <AppSlot><Spring /></AppSlot>
          <AppSlot><Help /></AppSlot>
          <AppSlot $active><ChromeIcon /></AppSlot>
          <AppSlot $run><Word /></AppSlot>
          <AppSlot $run><Player /></AppSlot>
          <AppSlot $run><VsCode /></AppSlot>
        </Apps>
        <Tray>
          <Chevron up c="#fff" w={14} />
          <TrayItem $ml={22.5}><Cloud /></TrayItem>
          <TrayItem $ml={22.5}>
            <Lines $align="center" $w={32}>
              <div>ENG</div>
              <div>IN</div>
            </Lines>
          </TrayItem>
          <TrayItem $ml={21}><Wifi /></TrayItem>
          <TrayItem $ml={10}><Sound /></TrayItem>
          <TrayItem $ml={10}><Battery /></TrayItem>
          <TrayItem $ml={14}>
            <Lines $align="right" $w={70} $ls={0}>
              <div>11:18 AM</div>
              <div>6/3/2024</div>
            </Lines>
          </TrayItem>
          <TrayItem $ml={11}><Bell /></TrayItem>
          <TrayItem $ml={23}><Copilot /></TrayItem>
        </Tray>
      </Taskbar>
    </Screen>
  );
}
